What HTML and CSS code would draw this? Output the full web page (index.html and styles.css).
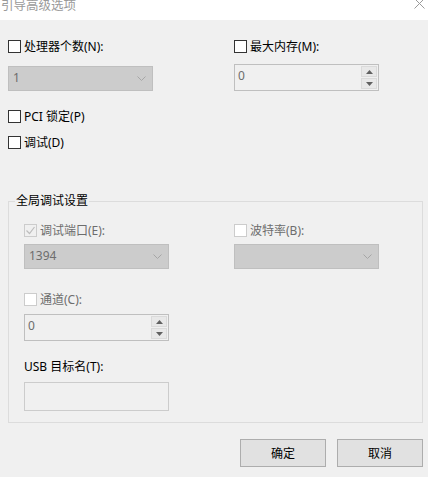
FILE: index.html
```html
<!DOCTYPE html>
<html lang="zh-CN">
  <head>
    <meta charset="UTF-8" />
    <meta name="viewport" content="width=device-width, initial-scale=1.0" />
    <title>引导高级选项</title>
    <link rel="stylesheet" href="styles.css">
  </head>
  <body>
    <div class="window">
      <div class="titlebar">
        <span class="title">引导高级选项</span>
        <svg class="close" width="11" height="11" viewBox="0 0 11 11">
          <path d="M0.5 0.5 L10.5 10.5 M10.5 0.5 L0.5 10.5" stroke="#9a9a9a" stroke-width="1" fill="none" />
        </svg>
      </div>

      <div class="content">
        <div class="two-col top-row">
          <div class="field">
            <label class="check"><span class="box"></span>处理器个数(N):</label>
            <div class="combo combo-first">
              <span class="value">1</span>
              <svg class="chevron" width="9" height="5" viewBox="0 0 9 5"><path d="M0.5 0.5 L4.5 4.5 L8.5 0.5" stroke="#a6a6a6" fill="none" /></svg>
            </div>
          </div>
          <div class="field">
            <label class="check"><span class="box"></span>最大内存(M):</label>
            <div class="spin spin-first">
              <span class="value">0</span>
              <div class="spin-buttons">
                <span class="spin-btn"><svg width="7" height="4" viewBox="0 0 7 4"><path d="M0 4 L3.5 0 L7 4 Z" fill="#606060" /></svg></span>
                <span class="spin-btn"><svg width="7" height="4" viewBox="0 0 7 4"><path d="M0 0 L3.5 4 L7 0 Z" fill="#606060" /></svg></span>
              </div>
            </div>
          </div>
        </div>

        <label class="check pci"><span class="box"></span>PCI 锁定(P)</label>
        <label class="check debug"><span class="box"></span>调试(D)</label>

        <fieldset class="group">
          <legend>全局调试设置</legend>

          <div class="two-col group-row">
            <div class="field">
              <label class="check disabled"><span class="box box-checked"><svg width="11" height="11" viewBox="0 0 11 11"><path d="M1.5 5.5 L4.5 8.5 L9.5 2" stroke="#bdbdbd" stroke-width="1.2" fill="none" /></svg></span>调试端口(E):</label>
              <div class="combo combo-group">
                <span class="value">1394</span>
                <svg class="chevron" width="9" height="5" viewBox="0 0 9 5"><path d="M0.5 0.5 L4.5 4.5 L8.5 0.5" stroke="#a6a6a6" fill="none" /></svg>
              </div>
            </div>
            <div class="field">
              <label class="check disabled"><span class="box"></span>波特率(B):</label>
              <div class="combo combo-group">
                <span class="value"></span>
                <svg class="chevron" width="9" height="5" viewBox="0 0 9 5"><path d="M0.5 0.5 L4.5 4.5 L8.5 0.5" stroke="#a6a6a6" fill="none" /></svg>
              </div>
            </div>
          </div>

          <label class="check disabled channel"><span class="box"></span>通道(C):</label>
          <div class="spin spin-channel">
            <span class="value">0</span>
            <div class="spin-buttons">
              <span class="spin-btn"><svg width="7" height="4" viewBox="0 0 7 4"><path d="M0 4 L3.5 0 L7 4 Z" fill="#606060" /></svg></span>
              <span class="spin-btn"><svg width="7" height="4" viewBox="0 0 7 4"><path d="M0 0 L3.5 4 L7 0 Z" fill="#606060" /></svg></span>
            </div>
          </div>

          <div class="usb-label">USB 目标名(T):</div>
          <div class="textbox"></div>
        </fieldset>

        <div class="buttons">
          <button class="btn">确定</button>
          <button class="btn">取消</button>
        </div>
      </div>
    </div>
  </body>
</html>
```

FILE: styles.css
```css
* {
  margin: 0;
  padding: 0;
  box-sizing: border-box;
  font-family: "Noto Sans", "Noto Sans CJK SC", sans-serif;
}

body {
  width: 428px;
  height: 477px;
  background-color: #f0f0f0;
  overflow: hidden;
  color: #000;
  font-size: 12px;
}

.titlebar {
  height: 20px;
  background-color: #fff;
  display: flex;
  justify-content: space-between;
  align-items: flex-start;
  overflow: hidden;
}

.title {
  font-size: 12.5px;
  line-height: 12px;
  margin-left: 1px;
  color: #9a9a9a;
}

.close {
  margin-top: -2px;
  margin-right: 3px;
}

.content {
  padding: 0 5px 0 8px;
  display: flex;
  flex-direction: column;
  align-items: flex-start;
}

.two-col {
  display: grid;
  grid-template-columns: 226px 145px;
}

.top-row {
  margin-top: 20px;
}

.field {
  display: flex;
  flex-direction: column;
}

.check {
  display: flex;
  align-items: center;
  gap: 3px;
  height: 13px;
  line-height: 13px;
  white-space: nowrap;
}

.box {
  width: 13px;
  height: 13px;
  border: 1px solid #333;
  background-color: #fff;
  flex-shrink: 0;
  display: flex;
  align-items: center;
  justify-content: center;
}

.check.disabled {
  color: #6d6d6d;
}

.check.disabled .box {
  border-color: #cccccc;
}

.box-checked {
  background-color: #f0f0f0;
}

.combo {
  width: 145px;
  height: 25px;
  background-color: #cccccc;
  border: 1px solid #bfbfbf;
  display: flex;
  align-items: center;
  justify-content: space-between;
  padding: 0 5px 0 4px;
  color: #6d6d6d;
}

.combo .value {
  line-height: 14px;
  margin-top: -1px;
}

.combo-first {
  margin-top: 13px;
}

.combo-group {
  margin-top: 7px;
}

.chevron {
  margin-right: 1px;
}

.spin {
  width: 145px;
  height: 27px;
  border: 1px solid #bfbfbf;
  background-color: #f0f0f0;
  display: flex;
  justify-content: space-between;
  color: #6d6d6d;
}

.spin .value {
  padding: 4px 0 0 3px;
  line-height: 14px;
}

.spin-buttons {
  width: 17px;
  display: flex;
  flex-direction: column;
  padding: 1px 1px 1px 0;
  gap: 1px;
}

.spin-btn {
  flex: 1;
  background-color: #e8e8e8;
  border: 1px solid #dadada;
  display: flex;
  align-items: center;
  justify-content: center;
}

.spin-first {
  margin-top: 11px;
}

.pci {
  margin-top: 19px;
}

.debug {
  margin-top: 13px;
}

.group {
  margin-top: 45px;
  width: 415px;
  border: 1px solid #dcdcdc;
  padding: 0 15px 11px 15px;
  display: flex;
  flex-direction: column;
  align-items: flex-start;
}

.group legend {
  line-height: 14px;
  padding: 0 1px;
  margin-left: -9px;
}

.group .two-col {
  grid-template-columns: 210px 145px;
}

.group-row {
  margin-top: 16px;
}

.channel {
  margin-top: 24px;
}

.spin-channel {
  margin-top: 8px;
}

.usb-label {
  margin-top: 19px;
  line-height: 14px;
}

.textbox {
  margin-top: 8px;
  width: 145px;
  height: 29px;
  border: 1px solid #cccccc;
  background-color: #f0f0f0;
}

.buttons {
  margin-top: 16px;
  align-self: flex-end;
  display: flex;
  gap: 11px;
}

.btn {
  width: 86px;
  height: 28px;
  background-color: #e1e1e1;
  border: 1px solid #adadad;
  font-size: 12px;
  color: #000;
}
```
